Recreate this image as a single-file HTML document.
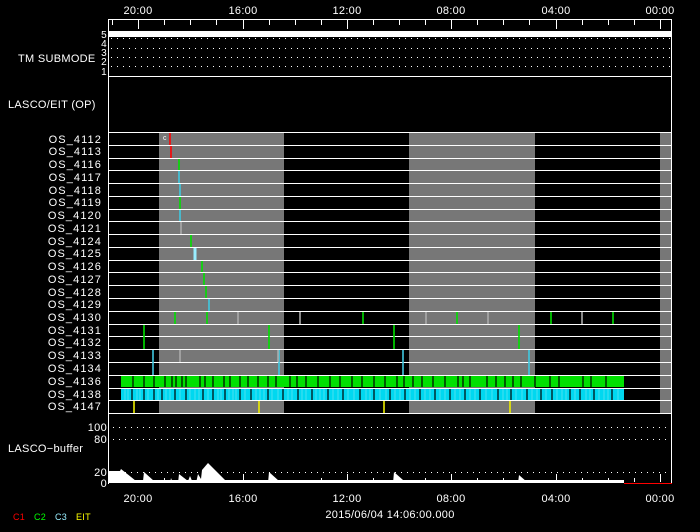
<!DOCTYPE html>
<html><head><meta charset="utf-8"><style>
html,body{margin:0;padding:0;background:#000;}
svg{display:block}
text{font-family:"Liberation Sans",sans-serif;fill:#fff;font-size:11px;letter-spacing:0.3px}
.rl text{letter-spacing:1.1px}
</style></head><body>
<svg width="700" height="532" viewBox="0 0 700 532" xmlns="http://www.w3.org/2000/svg">
<rect width="700" height="532" fill="#000"/>
<g text-anchor="middle">
<text x="138" y="14">20:00</text><text x="243" y="14">16:00</text><text x="347" y="14">12:00</text>
<text x="451" y="14">08:00</text><text x="556" y="14">04:00</text><text x="660" y="14">00:00</text>
</g>
<g stroke="#fff" stroke-width="1">
<line x1="108.5" y1="19.5" x2="671.5" y2="19.5"/>
<path d="M112.5 20v5M138.5 20v9M164.5 20v5M190.5 20v5M216.5 20v5M243.5 20v9M269.5 20v5M295.5 20v5M321.5 20v5M347.5 20v9M373.5 20v5M399.5 20v5M425.5 20v5M451.5 20v9M477.5 20v5M503.5 20v5M529.5 20v5M556.5 20v9M582.5 20v5M608.5 20v5M634.5 20v5M660.5 20v9"/>
<line x1="108.5" y1="19" x2="108.5" y2="484"/>
<line x1="671.5" y1="19" x2="671.5" y2="484"/>
<line x1="108" y1="76.5" x2="672" y2="76.5"/>
</g>
<rect x="109" y="31" width="562" height="6" fill="#fff"/>
<g stroke="#fff" stroke-dasharray="1 5" stroke-width="1">
<line x1="111" y1="38.5" x2="671" y2="38.5"/>
<line x1="111" y1="48.5" x2="671" y2="48.5"/>
<line x1="111" y1="57.5" x2="671" y2="57.5"/>
<line x1="111" y1="66.5" x2="671" y2="66.5"/>
</g>
<g text-anchor="end">
<text x="107" y="38" style="font-size:10px">5</text><text x="107" y="47" style="font-size:10px">4</text>
<text x="107" y="56" style="font-size:10px">3</text><text x="107" y="65" style="font-size:10px">2</text>
<text x="107" y="75" style="font-size:10px">1</text>
</g>
<text x="18" y="62">TM SUBMODE</text>
<text x="8" y="108">LASCO/EIT (OP)</text>
<g fill="#777">
<rect x="159" y="133" width="125" height="280"/>
<rect x="409" y="133" width="126" height="280"/>
<rect x="660" y="133" width="11" height="280"/>
</g>
<g text-anchor="end" class="rl">
<text x="102" y="143">OS_4112</text><text x="102" y="155">OS_4113</text><text x="102" y="168">OS_4116</text>
<text x="102" y="181">OS_4117</text><text x="102" y="194">OS_4118</text><text x="102" y="206">OS_4119</text>
<text x="102" y="219">OS_4120</text><text x="102" y="232">OS_4121</text><text x="102" y="245">OS_4124</text>
<text x="102" y="257">OS_4125</text><text x="102" y="270">OS_4126</text><text x="102" y="283">OS_4127</text>
<text x="102" y="296">OS_4128</text><text x="102" y="308">OS_4129</text><text x="102" y="321">OS_4130</text>
<text x="102" y="334">OS_4131</text><text x="102" y="346">OS_4132</text><text x="102" y="359">OS_4133</text>
<text x="102" y="372">OS_4134</text><text x="102" y="385">OS_4136</text><text x="102" y="398">OS_4138</text>
<text x="102" y="410">OS_4147</text>
</g>
<rect x="121" y="375" width="503" height="12" fill="#00e000"/>
<rect x="121" y="388" width="503" height="12" fill="#00d8f0"/>
<g stroke="#000" stroke-width="1.2">
<path d="M133 375v12M144 375v12M154 375v12M165 375v12M172 375v12M176 375v12M182 375v12M186 375v12M200 375v12M205 375v12M213 375v12M224 375v12M230 375v12M240 375v12M248 375v12M258 375v12M268 375v12M276 375v12M290 375v12M297 375v12M306 375v12M318 375v12M330 375v12M340 375v12M352 375v12M362 375v12M374 375v12M385 375v12M397 375v12M404 375v12M413 375v12M422 375v12M433 375v12M445 375v12M458 375v12M463 375v12M470 375v12M487 375v12M496 375v12M505 375v12M513 375v12M521 375v12M535 375v12M550 375v12M559 375v12M583 375v12M591 375v12M606 375v12"/>
<path d="M132 388v12M144 388v12M154 388v12M162 388v12M175 388v12M186 388v12M203 388v12M213 388v12M225 388v12M240 388v12M251 388v12M268 388v12M283 388v12M298 388v12M312 388v12M328 388v12M343 388v12M360 388v12M374 388v12M390 388v12M405 388v12M420 388v12M435 388v12M450 388v12M465 388v12M480 388v12M498 388v12M511 388v12M527 388v12M541 388v12M552 388v12M570 388v12M580 388v12M594 388v12M612 388v12"/>
</g>
<g stroke="#9ce8f0" stroke-width="0.6" opacity="0.8">
<path d="M125 388v12M128 388v12M137 388v12M140 388v12M148 388v12M158 388v12M166 388v12M170 388v12M180 388v12M190 388v12M195 388v12M199 388v12M208 388v12M218 388v12M221 388v12M229 388v12M233 388v12M236 388v12M245 388v12M256 388v12M260 388v12M264 388v12M272 388v12M278 388v12M288 388v12M292 388v12M302 388v12M306 388v12M316 388v12M320 388v12M324 388v12M333 388v12M338 388v12M348 388v12M354 388v12M366 388v12M370 388v12M380 388v12M386 388v12M395 388v12M400 388v12M410 388v12M415 388v12M425 388v12M430 388v12M440 388v12M445 388v12M455 388v12M460 388v12M470 388v12M475 388v12M486 388v12M492 388v12M503 388v12M507 388v12M516 388v12M522 388v12M532 388v12M537 388v12M546 388v12M557 388v12M562 388v12M566 388v12M575 388v12M586 388v12M590 388v12M599 388v12M604 388v12M608 388v12M618 388v12"/>
</g>
<g stroke="#fff" stroke-width="1">
<path d="M108 132.5H672M108 145.5H672M108 158.5H672M108 170.5H672M108 183.5H672M108 196.5H672M108 209.5H672M108 221.5H672M108 234.5H672M108 247.5H672M108 260.5H672M108 272.5H672M108 285.5H672M108 298.5H672M108 311.5H672M108 324.5H672M108 336.5H672M108 349.5H672M108 362.5H672M108 375.5H672M108 388.5H672M108 400.5H672M108 413.5H672"/>
</g>
<g stroke-width="1.6">
<path d="M170 133v12M171 146v12" stroke="#f00"/>
<path d="M179 159v11M180 197v12M191 235v12M202 261v11M204 273v12M206 286v12M175 312v12M207 312v12M363 312v12M457 312v12M551 312v12M613 312v12M144 325v24M269 325v24M394 325v24M519 325v24" stroke="#00e000"/>
<path d="M179 171v12M180 184v12M180 210v11M209 299v12M153 350v25M279 350v25M403 350v25M529 350v25" stroke="#40c8e0"/>
<path d="M195 248v12" stroke="#9ef" stroke-width="3"/>
<path d="M181 222v12M238 312v12M300 312v12M426 312v12M488 312v12M582 312v12M180 350v12M278 350v12" stroke="#aaa"/>
<path d="M134 401v12M259 401v12M384 401v12M510 401v12" stroke="#ee0"/>
</g>
<text x="163" y="140" style="font-size:7px">c</text>
<g stroke="#fff" stroke-dasharray="1 5">
<line x1="113" y1="427.5" x2="671" y2="427.5"/>
<line x1="113" y1="439.5" x2="671" y2="439.5"/>
<line x1="113" y1="472.5" x2="671" y2="472.5"/>
</g>
<g text-anchor="end">
<text x="107" y="431">100</text><text x="107" y="443">80</text>
<text x="107" y="476">20</text><text x="107" y="487">0</text>
</g>
<text x="8" y="452">LASCO−buffer</text>
<path fill="#fff" d="M109 483V471H120L121 469L136 481H143L144 472L154 481L156 483H170L171 478L173 483H178L179 474L188 481L190 476L193 483H196L198 474L201 479L202 470L208 463L226 481V483H268L269 472L279 481V483H393L394 472L403 480V483H518L519 475L527 482V483H624V481H109Z"/>
<path d="M109 481.5H624" stroke="#fff" stroke-width="3"/>
<path d="M624 483.5H672" stroke="#f00"/>
<g stroke="#fff">
<path d="M243.5 474v8M347.5 474v8M451.5 474v8M556.5 474v8M660.5 474v8M130.5 478v4M164.5 478v4M190.5 478v4M321.5 478v4M373.5 478v4M425.5 478v4M477.5 478v4M503.5 478v4M582.5 478v4M608.5 478v4M634.5 478v4"/>
</g>
<g text-anchor="middle">
<text x="138" y="502">20:00</text><text x="243" y="502">16:00</text><text x="347" y="502">12:00</text>
<text x="451" y="502">08:00</text><text x="556" y="502">04:00</text><text x="660" y="502">00:00</text>
</g>
<text x="390" y="518" text-anchor="middle">2015/06/04 14:06:00.000</text>
<text x="13" y="520" style="font-size:9px;fill:#f00">C1</text>
<text x="34" y="520" style="font-size:9px;fill:#0f0">C2</text>
<text x="55" y="520" style="font-size:9px;fill:#9ef">C3</text>
<text x="76" y="520" style="font-size:9px;fill:#ff0">EIT</text>
</svg>
</body></html>
